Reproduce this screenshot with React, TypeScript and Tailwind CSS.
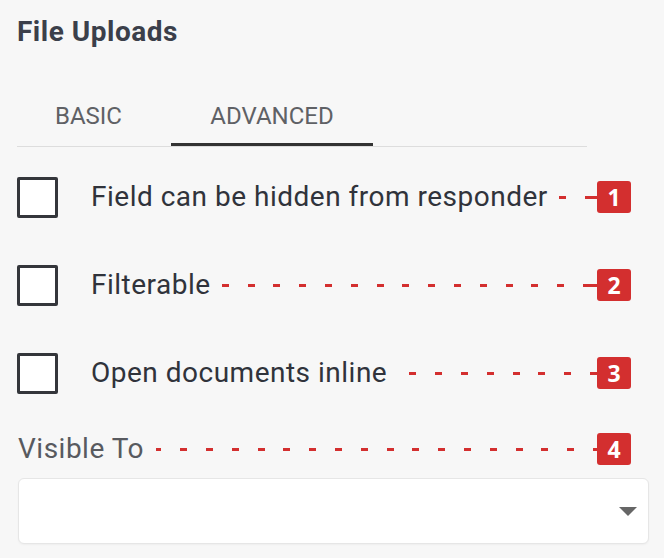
import React from 'react';

const Badge: React.FC<{ n: number }> = ({ n }) => (
  <div className="relative w-[34px] h-[32px] rounded-[3px] bg-[#d32f2f] text-white flex items-center justify-center text-[23px] font-bold leading-none font-['Open_Sans',sans-serif]">
    {n}
  </div>
);

// dashed leader line; the tail connects the last dash to the badge
const Leader: React.FC<{ gap: string; tail: string; pos?: string }> = ({ gap, tail, pos = '' }) => (
  <div className={`flex-1 flex items-center ${gap}`}>
    <div
      className={`flex-1 h-[3px] bg-[repeating-linear-gradient(to_left,#d32f2f_0px,#d32f2f_7px,transparent_7px,transparent_25.8px)] ${pos}`}
    />
    <div className={`h-[3px] bg-[#d32f2f] ${tail}`} />
  </div>
);

const CheckRow: React.FC<{ label: string; n: number; gap: string; tail: string }> = ({ label, n, gap, tail }) => (
  <div className="flex items-center h-[42px]">
    <div className="w-[41px] h-[41px] border-[3px] border-[#34363b] bg-white rounded-[2px] shrink-0" />
    <span className="ml-[33px] text-[28px] leading-[30px] tracking-[0.5px] text-[#30333b] whitespace-nowrap">{label}</span>
    <Leader gap={gap} tail={tail} />
    <Badge n={n} />
  </div>
);

export default function App() {
  return (
    <div className="w-[664px] h-[558px] bg-[#f7f7f7] font-['Roboto',sans-serif] pl-[17px] pt-[16px] overflow-hidden">
      <h1 className="text-[28px] leading-[32px] font-bold tracking-[0.5px] text-[#3b3f4a]">File Uploads</h1>

      <div className="mt-[54px] w-[570px] flex border-b border-[#dddddd]">
        <div className="w-[143px] text-center text-[24px] leading-[28px] text-[#5f6165] pb-[16px]">BASIC</div>
        <div className="w-[11px]" />
        <div className="w-[202px] text-center text-[24px] leading-[28px] text-[#5f6165] pb-[13px] border-b-[3px] border-[#333333]">
          ADVANCED
        </div>
      </div>

      <div className="w-[614px] mt-[29px] flex flex-col gap-[46px]">
        <CheckRow label="Field can be hidden from responder" n={1} gap="ml-[10px]" tail="w-[5px]" />
        <CheckRow label="Filterable" n={2} gap="ml-[9px]" tail="w-[7px]" />
        <CheckRow label="Open documents inline" n={3} gap="ml-[21px]" tail="w-0" />
      </div>

      <div className="w-[614px] mt-[38px] flex items-center h-[34px]">
        <span className="text-[28px] leading-[30px] tracking-[0.5px] text-[#585a5f] whitespace-nowrap pl-px">Visible To</span>
        <Leader gap="ml-[12px]" tail="w-0" pos="bg-[position:right_-3px_center]" />
        <Badge n={4} />
      </div>

      <div className="mt-[12px] ml-px w-[631px] h-[66px] bg-white border border-[#e6e6e6] rounded-[6px] shadow-[0_1px_2px_rgba(0,0,0,0.04)] flex items-center justify-end pr-[11px]">
        <svg width="18" height="9" viewBox="0 0 18 9">
          <path d="M0 0 L18 0 L9 9 Z" fill="#666666" />
        </svg>
      </div>
    </div>
  );
}
